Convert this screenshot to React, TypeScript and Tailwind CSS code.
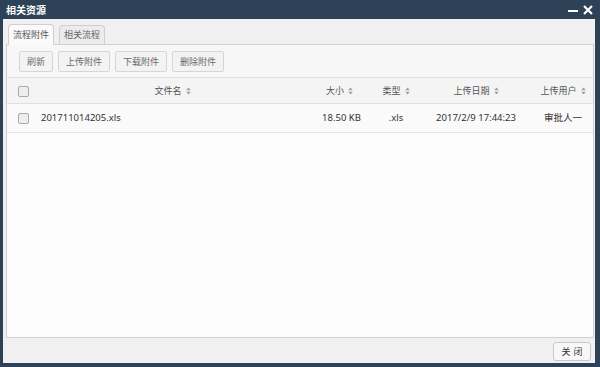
import React from "react";

const font = { fontFamily: '"Noto Sans", "Noto Sans CJK SC", sans-serif' };

const SortIcon = () => (
  <svg width="5" height="8" viewBox="0 0 5 8" className="ml-[4px] inline-block">
    <path d="M2.5 0.5 L4.8 3.2 H0.2 Z" fill="#a0a0a0" />
    <path d="M2.5 7.5 L4.8 4.8 H0.2 Z" fill="#a0a0a0" />
  </svg>
);

const Check = () => (
  <span className="inline-block w-[11px] h-[11px] rounded-[2px] border border-[#a9a9a9] bg-[#eeeeee]" />
);

const ToolButton = ({ label }: { label: string }) => (
  <button className="h-[21px] px-[7px] border border-[#d6d6d6] rounded-[2px] bg-[#f3f3f3] text-[9px] text-[#6a6a6a] leading-none">
    {label}
  </button>
);

export default function App() {
  const cols = [
    { key: "name", label: "文件名", w: "w-[267px]" },
    { key: "size", label: "大小", w: "w-[67px]" },
    { key: "type", label: "类型", w: "w-[46px]" },
    { key: "date", label: "上传日期", w: "w-[114px]" },
    { key: "user", label: "上传用户", w: "flex-1" },
  ];

  return (
    <div
      className="w-[600px] h-[367px] bg-[#2d4256] flex flex-col pl-[3px] pr-[5px] pb-[4px] overflow-hidden"
      style={font}
    >
      {/* title bar */}
      <div className="h-[19px] flex items-center justify-between pl-[3px] pr-[2px]">
        <span className="text-white text-[10px] font-bold leading-none">相关资源</span>
        <div className="flex items-center gap-[5px] pt-[1px]">
          <svg width="10" height="10" viewBox="0 0 10 10">
            <path d="M0 6 H10" stroke="#ffffff" strokeWidth="2" />
          </svg>
          <svg width="10" height="10" viewBox="0 0 10 10">
            <path d="M1 1 L9 9 M9 1 L1 9" stroke="#ffffff" strokeWidth="2.2" />
          </svg>
        </div>
      </div>

      {/* body */}
      <div className="flex-1 bg-[#f0f0f0] flex flex-col">
        <div className="flex-1 flex flex-col pl-[3px] pr-[1px] pt-[5px]">
          {/* tabs */}
          <div className="flex items-end gap-[5px] pl-[2px] h-[20px] relative z-10">
            <div className="h-[21px] px-[4px] flex items-center border border-b-0 border-[#cfcfcf] rounded-t-[4px] bg-[#fafafa] text-[9px] text-[#555] -mb-[1px]">
              流程附件
            </div>
            <div className="h-[19px] px-[4px] flex items-center border border-b-0 border-[#cfcfcf] rounded-t-[4px] bg-[#ececec] text-[9px] text-[#666]">
              相关流程
            </div>
          </div>

          {/* panel */}
          <div className="flex-1 border border-[#d0d0d0] bg-[#fafafa] flex flex-col">
            <div className="h-[33px] flex items-center gap-[5px] pl-[12px] border-b border-[#e2e2e2] bg-[#f7f7f7]">
              <ToolButton label="刷新" />
              <ToolButton label="上传附件" />
              <ToolButton label="下载附件" />
              <ToolButton label="删除附件" />
            </div>

            {/* header */}
            <div className="h-[26px] flex items-center bg-[#f4f4f4] border-b border-[#e0e0e0] text-[9px] text-[#555]">
              <div className="w-[32px] flex justify-center pt-[2px]">
                <Check />
              </div>
              {cols.map((c) => (
                <div key={c.key} className={`${c.w} flex items-center justify-center`}>
                  {c.label}
                  <SortIcon />
                </div>
              ))}
            </div>

            {/* row */}
            <div className="h-[29px] flex items-center bg-[#fafafa] border-b border-[#e4e4e4] text-[9.5px] text-[#333]">
              <div className="w-[32px] flex justify-center pt-[1px]">
                <Check />
              </div>
              <div className="w-[267px] pl-[2px]">201711014205.xls</div>
              <div className="w-[67px] text-center pl-[4px]">18.50 KB</div>
              <div className="w-[46px] text-center">.xls</div>
              <div className="w-[114px] text-center">2017/2/9 17:44:23</div>
              <div className="flex-1 text-center">审批人一</div>
            </div>

            <div className="flex-1 bg-[#fcfcfc]" />
          </div>
        </div>

        {/* footer */}
        <div className="h-[25px] flex items-center justify-end pr-[4px] pt-[1px]">
          <button className="h-[19px] w-[38px] border border-[#c8c8c8] rounded-[3px] bg-[#f8f8f8] text-[9px] text-[#333] leading-none tracking-[3px] pl-[3px]">
            关闭
          </button>
        </div>
      </div>
    </div>
  );
}
